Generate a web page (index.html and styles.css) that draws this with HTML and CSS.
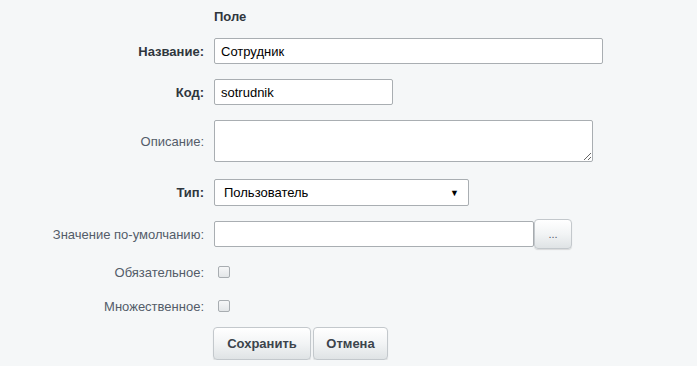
FILE: index.html
```html
<!DOCTYPE html>
<html lang="ru">
<head>
<meta charset="utf-8">
<link rel="stylesheet" href="styles.css">
</head>
<body>
<div class="form">
  <div class="row r-title">
    <div class="label"></div>
    <div class="field title">Поле</div>
  </div>
  <div class="row r-name">
    <div class="label bold">Название:</div>
    <div class="field"><input class="input w-name" type="text" value="Сотрудник"></div>
  </div>
  <div class="row r-code">
    <div class="label bold">Код:</div>
    <div class="field"><input class="input w-code" type="text" value="sotrudnik"></div>
  </div>
  <div class="row r-desc">
    <div class="label">Описание:</div>
    <div class="field"><textarea class="textarea"></textarea></div>
  </div>
  <div class="row r-type">
    <div class="label bold">Тип:</div>
    <div class="field"><div class="select"><span>Пользователь</span><span class="arrow">▼</span></div></div>
  </div>
  <div class="row r-def">
    <div class="label">Значение по-умолчанию:</div>
    <div class="field"><input class="input w-def" type="text" value=""><button class="btn dots">...</button></div>
  </div>
  <div class="row r-req">
    <div class="label">Обязательное:</div>
    <div class="field"><span class="check"></span></div>
  </div>
  <div class="row r-mult">
    <div class="label">Множественное:</div>
    <div class="field"><span class="check"></span></div>
  </div>
  <div class="row r-btns">
    <div class="label"></div>
    <div class="field buttons"><button class="btn main save">Сохранить</button><button class="btn main cancel">Отмена</button></div>
  </div>
</div>
</body>
</html>
```

FILE: styles.css
```css
html, body {
  margin: 0;
  padding: 0;
  background: #f5f7f8;
  font-family: "Liberation Sans", Arial, sans-serif;
  font-size: 13px;
  color: #535c69;
}

.form {
  display: flex;
  flex-direction: column;
  padding-top: 9px;
}

.row {
  display: flex;
  align-items: center;
  gap: 10px;
}

.label {
  width: 204px;
  flex: none;
  text-align: right;
  color: #535c69;
}

.label.bold {
  font-weight: bold;
  color: #2f363d;
}

.field {
  display: flex;
  align-items: center;
}

.title {
  font-weight: bold;
  color: #2f363d;
  height: 16px;
  line-height: 16px;
}

.r-name { margin-top: 13px; }
.r-code { margin-top: 15px; }
.r-desc { margin-top: 15px; }
.r-type { margin-top: 17px; }
.r-def { margin-top: 13px; }
.r-req { margin-top: 17px; height: 12px; }
.r-mult { margin-top: 22px; height: 12px; }
.r-btns { margin-top: 15px; }

.input, .textarea, .select {
  box-sizing: border-box;
  border: 1px solid #a9aeb2;
  border-radius: 2px;
  background: #fff;
  font-family: "Liberation Sans", Arial, sans-serif;
  font-size: 13px;
  color: #000;
  padding: 0 6px;
  margin: 0;
  outline: none;
}

.input {
  height: 26px;
}

.w-name { width: 389px; }
.w-code { width: 179px; }
.w-def { width: 320px; }

.textarea {
  width: 379px;
  height: 42px;
  resize: both;
  display: block;
}

.select {
  width: 255px;
  height: 27px;
  display: flex;
  align-items: center;
  justify-content: space-between;
  padding: 0 9px;
}

.select .arrow {
  font-size: 9px;
  color: #000;
}

.btn {
  box-sizing: border-box;
  border: 1px solid #c3c8cc;
  border-radius: 4px;
  background: linear-gradient(to bottom, #ffffff 0%, #f2f4f5 50%, #dfe3e5 100%);
  box-shadow: 0 1px 1px rgba(0,0,0,0.12);
  font-family: "Liberation Sans", Arial, sans-serif;
  color: #535c69;
  cursor: pointer;
  margin: 0;
  padding: 0;
}

.dots {
  width: 38px;
  height: 30px;
  font-size: 11px;
}

.check {
  display: block;
  box-sizing: border-box;
  width: 12px;
  height: 12px;
  border: 1px solid #a8adb1;
  border-radius: 2px;
  background: linear-gradient(to bottom, #f6f7f8, #e3e6e8);
  margin-left: 4px;
}

.buttons {
  gap: 2px;
  margin-left: -1px;
}

.main {
  height: 33px;
  font-size: 13px;
  font-weight: bold;
  color: #3c444c;
}

.save { width: 98px; }
.cancel { width: 75px; }
```
